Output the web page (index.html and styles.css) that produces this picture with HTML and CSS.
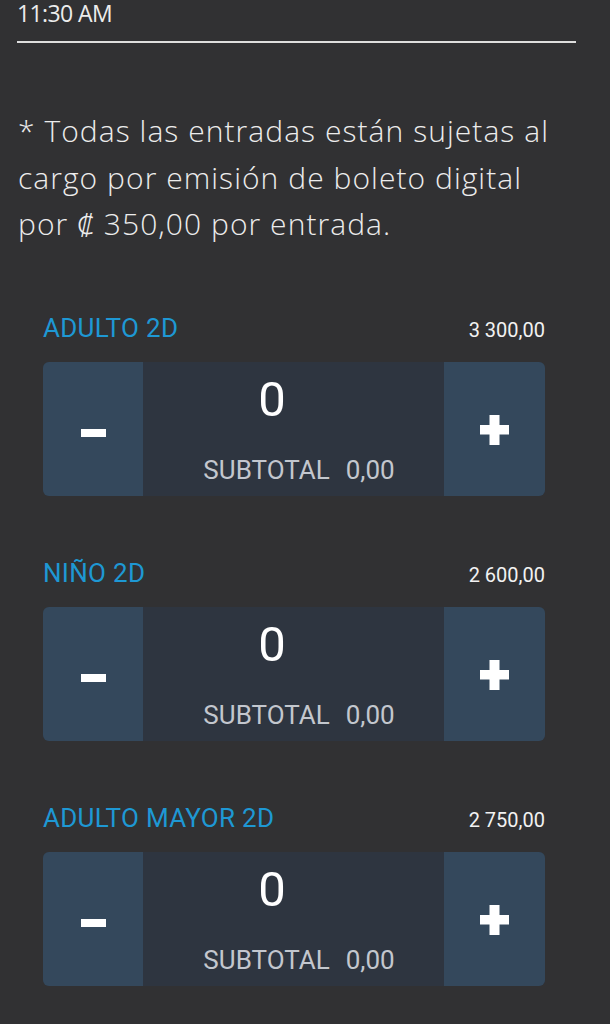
FILE: index.html
```html
<!DOCTYPE html>
<html lang="es">
<head>
    <meta charset="UTF-8">
    <meta name="viewport" content="width=device-width, initial-scale=1.0">
    <title>Entradas</title>
    <link rel="stylesheet" href="styles.css">
</head>
<body>

    <div class="header">
        <span class="time">11:30 AM</span>
    </div>

    <p class="notice">
        * Todas las entradas están sujetas al<br>
        cargo por emisión de boleto digital<br>
        por <span class="colon">₡</span> 350,00 por entrada.
    </p>

    <div class="tickets">
        <div class="ticket">
            <div class="ticket-head">
                <span class="ticket-name">ADULTO 2D</span>
                <span class="ticket-price">3 300,00</span>
            </div>
            <div class="counter">
                <button class="btn minus">
                    <svg width="25" height="8" viewBox="0 0 25 8"><rect width="25" height="8" fill="#fff"/></svg>
                </button>
                <div class="qty">
                    <span class="qty-num">0</span>
                    <span class="subtotal">SUBTOTAL<span class="subtotal-val">0,00</span></span>
                </div>
                <button class="btn plus">
                    <svg width="29" height="30" viewBox="0 0 29 30"><rect x="0" y="10" width="29" height="9.5" fill="#fff"/><rect x="9.5" y="0" width="10" height="30" fill="#fff"/></svg>
                </button>
            </div>
        </div>

        <div class="ticket">
            <div class="ticket-head">
                <span class="ticket-name">NIÑO 2D</span>
                <span class="ticket-price">2 600,00</span>
            </div>
            <div class="counter">
                <button class="btn minus">
                    <svg width="25" height="8" viewBox="0 0 25 8"><rect width="25" height="8" fill="#fff"/></svg>
                </button>
                <div class="qty">
                    <span class="qty-num">0</span>
                    <span class="subtotal">SUBTOTAL<span class="subtotal-val">0,00</span></span>
                </div>
                <button class="btn plus">
                    <svg width="29" height="30" viewBox="0 0 29 30"><rect x="0" y="10" width="29" height="9.5" fill="#fff"/><rect x="9.5" y="0" width="10" height="30" fill="#fff"/></svg>
                </button>
            </div>
        </div>

        <div class="ticket">
            <div class="ticket-head">
                <span class="ticket-name">ADULTO MAYOR 2D</span>
                <span class="ticket-price">2 750,00</span>
            </div>
            <div class="counter">
                <button class="btn minus">
                    <svg width="25" height="8" viewBox="0 0 25 8"><rect width="25" height="8" fill="#fff"/></svg>
                </button>
                <div class="qty">
                    <span class="qty-num">0</span>
                    <span class="subtotal">SUBTOTAL<span class="subtotal-val">0,00</span></span>
                </div>
                <button class="btn plus">
                    <svg width="29" height="30" viewBox="0 0 29 30"><rect x="0" y="10" width="29" height="9.5" fill="#fff"/><rect x="9.5" y="0" width="10" height="30" fill="#fff"/></svg>
                </button>
            </div>
        </div>
    </div>

</body>
</html>
```

FILE: styles.css
```css
body {
    margin: 0;
    background-color: #313133;
    color: #ececec;
    font-family: 'Open Sans', 'DejaVu Sans', sans-serif;
}

.header {
    margin: 0 34px 0 17px;
    padding-bottom: 15px;
    border-bottom: 2px solid #dedede;
}

.time {
    display: block;
    font-size: 23px;
    line-height: 26px;
    letter-spacing: -0.6px;
}

.notice {
    margin: 65px 0 0 18px;
    font-size: 30px;
    font-weight: 300;
    line-height: 46.7px;
    letter-spacing: 1.05px;
}

.colon {
    font-family: 'Noto Sans', Lato, 'Liberation Sans', sans-serif;
    font-weight: 300;
    line-height: 1;
}

.tickets {
    width: 502px;
    margin: 65px 0 0 43px;
    font-family: Roboto, 'Liberation Sans', sans-serif;
}

.ticket {
    margin-bottom: 62px;
}

.ticket-head {
    display: flex;
    justify-content: space-between;
    align-items: baseline;
    margin-bottom: 19px;
}

.ticket-name {
    color: #1e98d4;
    font-size: 26px;
    line-height: 30px;
    letter-spacing: 0.3px;
}

.ticket-price {
    color: #f2f2f2;
    font-size: 20px;
}

.counter {
    display: flex;
    height: 134px;
    border-radius: 6px;
    overflow: hidden;
    background-color: #2e3540;
}

.btn {
    display: flex;
    align-items: center;
    justify-content: center;
    width: 100px;
    padding: 0;
    border: none;
    background-color: #34485c;
    cursor: pointer;
}

.btn.minus {
    padding-top: 8px;
}

.btn.plus {
    width: 101px;
    padding-top: 2px;
}

.qty {
    flex: 1;
    display: flex;
    flex-direction: column;
    align-items: center;
    padding-top: 10px;
}

.qty-num {
    color: #ffffff;
    font-size: 49px;
    line-height: 56px;
    padding-right: 43px;
}

.subtotal {
    margin-top: 27px;
    padding-left: 11px;
    color: #c3c7ce;
    font-size: 26px;
    line-height: 30px;
}

.subtotal-val {
    margin-left: 16px;
}
```
